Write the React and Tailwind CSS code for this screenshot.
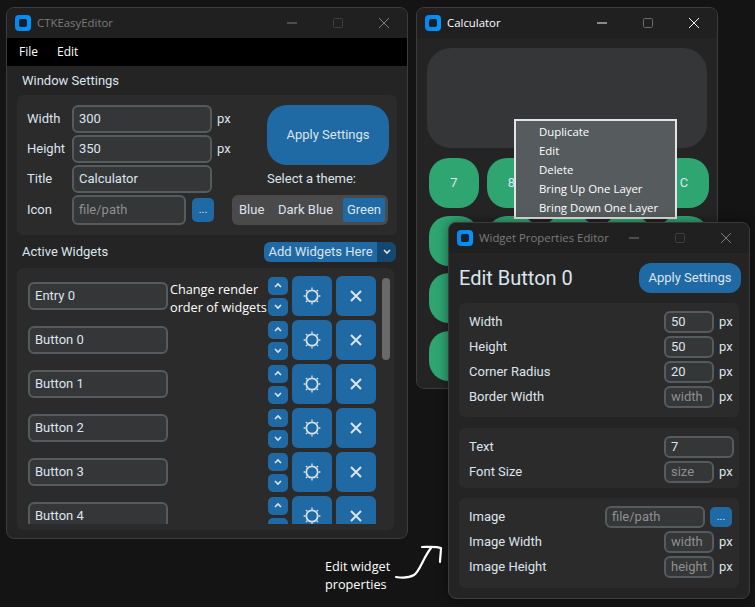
function Logo() {
  return (
    <div className="w-4 h-4 rounded-[4px] bg-gradient-to-r from-[#0a84e8] to-[#0096ff] flex items-center justify-center shrink-0">
      <div className="w-2 h-2 rounded-[2px] bg-[#14202c]" />
    </div>
  );
}
function TitleBar({ title, active, w }) {
  const tone = active ? "text-[#ffffff]" : "text-[#7c7c7c]";
  const stroke = active ? "#f2f2f2" : "#7c7c7c";
  const box = active ? "#6a6a6a" : "#3f3f3f";
  return (
    <div className={`h-[30px] bg-[#202020] flex items-center pl-[8px] shrink-0 ${tone}`} style={{ width: w }}>
      <Logo />
      <span className="ml-[6px] text-[11.4px] font-['Open_Sans','Noto_Sans',sans-serif] flex-1 leading-none">{title}</span>
      <div className="flex items-center">
        <svg width="12" height="12" viewBox="0 0 12 12" className="mr-[34px]"><path d="M1 6H11" stroke={stroke} strokeWidth="1" /></svg>
        <svg width="12" height="12" viewBox="0 0 12 12" className="mr-[34px]"><rect x="1.5" y="1.5" width="9" height="9" rx="1.2" fill="none" stroke={box} /></svg>
        <svg width="12" height="12" viewBox="0 0 12 12" className="mr-[17px]"><path d="M1 1L11 11M11 1L1 11" stroke={stroke} strokeWidth="1" /></svg>
      </div>
    </div>
  );
}
function Entry({ value, placeholder, className = "" }) {
  return (
    <div className={`border-2 border-[#565b5e] bg-[#343638] rounded-[6px] flex items-center pl-[5px] pb-[1px] text-[13px] leading-none shrink-0 ${placeholder ? "text-[#8f8f8f]" : "text-[#dce4ee]"} ${className}`}>
      {value || placeholder}
    </div>
  );
}
function Gear() {
  return (
    <svg width="20" height="20" viewBox="0 0 20 20" fill="none" stroke="#dce4ee">
      <circle cx="10" cy="10" r="5.7" strokeWidth="1.7" />
      <path d="M10 1.6V3.4M10 16.6V18.4M1.6 10H3.4M16.6 10H18.4M4 4L5.2 5.2M14.8 14.8L16 16M16 4L14.8 5.2M5.2 14.8L4 16" strokeWidth="1.3" />
    </svg>
  );
}
function Cross() {
  return (
    <svg width="14" height="14" viewBox="0 0 14 14" fill="none" stroke="#dce4ee" strokeWidth="2">
      <path d="M2 2L12 12M12 2L2 12" />
    </svg>
  );
}
function Chevron({ up }) {
  return (
    <svg width="8" height="7" viewBox="0 0 8 7" fill="none" stroke="#dce4ee" strokeWidth="1.6">
      <path d={up ? "M1 5L4 2L7 5" : "M1 2L4 5L7 2"} />
    </svg>
  );
}
function WidgetRow({ name, note }) {
  return (
    <div className="h-[40px] flex items-center mb-[4px] shrink-0">
      <Entry value={name} className="w-[140px] h-[28px] ml-[11px]" />
      <div className="w-[100px] text-[12.7px] leading-[18px] text-white font-['Open_Sans','Noto_Sans',sans-serif] whitespace-nowrap pl-[2px] mt-[4px]">
        {note}
      </div>
      <div className="flex flex-col gap-[3px] w-[20px] shrink-0">
        <div className="h-[18px] rounded-[5px] bg-[#1f6aa5] flex items-center justify-center"><Chevron up /></div>
        <div className="h-[18px] rounded-[5px] bg-[#1f6aa5] flex items-center justify-center"><Chevron /></div>
      </div>
      <div className="w-[40px] h-[40px] ml-[4px] rounded-[6px] bg-[#1f6aa5] flex items-center justify-center"><Gear /></div>
      <div className="w-[40px] h-[40px] ml-[4px] rounded-[6px] bg-[#1f6aa5] flex items-center justify-center"><Cross /></div>
    </div>
  );
}
function SettingRow({ label, children }) {
  return (
    <div className="flex items-center h-[28px] mb-[2px]">
      <span className="w-[45px] text-[13px] text-[#dce4ee]">{label}</span>
      {children}
    </div>
  );
}
function PropRow({ label, value, placeholder, wide }) {
  return (
    <div className="flex items-center h-[22px] mb-[3px] text-[13px] text-[#dce4ee]">
      <span className="flex-1">{label}</span>
      {wide ? (
        <Entry value={value} className="w-[70px] h-[22px]" />
      ) : (
        <>
          <Entry value={value} placeholder={placeholder} className="w-[50px] h-[22px]" />
          <span className="w-[20px] pl-[5px]">px</span>
        </>
      )}
    </div>
  );
}
const win = "absolute rounded-[8px] border border-[#3c3c3c] bg-[#242424] flex flex-col overflow-hidden font-['Roboto',sans-serif]";
export default function App() {
  const calc = ["7", "8", "", "", "C", "", "", "", "", "", "", "", "", "", "", "", "", "", "", ""];
  return (
    <div className="relative w-[755px] h-[607px] bg-[#141414] overflow-hidden">
      {/* Main editor window */}
      <div className={`${win} left-[6px] top-[7px] w-[402px] h-[532px]`}>
        <TitleBar title="CTKEasyEditor" w={400} />
        <div className="h-[28px] bg-black flex items-center pl-[12px] gap-[19px] text-[12px] text-white font-['Open_Sans','Noto_Sans',sans-serif] shrink-0">
          <span>File</span><span>Edit</span>
        </div>
        <div className="px-[10px] flex flex-col flex-1">
          <div className="h-[29px] flex items-center pl-[5px] text-[13px] text-[#dce4ee]">Window Settings</div>
          <div className="h-[140px] w-[380px] bg-[#2b2b2b] rounded-[6px] px-[10px] pt-[10px] flex">
            <div className="w-[205px] shrink-0">
              <SettingRow label="Width"><Entry value="300" className="w-[140px] h-[28px]" /><span className="ml-[5px] text-[13px] text-[#dce4ee]">px</span></SettingRow>
              <SettingRow label="Height"><Entry value="350" className="w-[140px] h-[28px]" /><span className="ml-[5px] text-[13px] text-[#dce4ee]">px</span></SettingRow>
              <SettingRow label="Title"><Entry value="Calculator" className="w-[140px] h-[28px]" /></SettingRow>
              <div className="flex items-center h-[30px]">
                <span className="w-[45px] text-[13px] text-[#dce4ee]">Icon</span>
                <Entry placeholder="file/path" className="w-[114px] h-[30px]" />
                <div className="w-[22px] h-[24px] ml-[6px] rounded-[5px] bg-[#1f6aa5] flex items-center justify-center text-[11px] text-[#dce4ee]">...</div>
              </div>
            </div>
            <div className="flex-1 flex flex-col">
              <div className="ml-[35px] w-[122px] h-[60px] rounded-[20px] bg-[#1f6aa5] flex items-center justify-center text-[13px] text-[#dce4ee]">Apply Settings</div>
              <div className="h-[28px] flex items-center ml-[35px] text-[13px] text-[#dce4ee]">Select a theme:</div>
              <div className="mt-[2px] h-[30px] w-[156px] rounded-[6px] bg-[#4a4a4a] flex items-center pl-[3px] text-[13px] text-[#dce4ee]">
                <span className="w-[35px] pl-[4px]">Blue</span>
                <span className="w-[73px] pl-[8px]">Dark Blue</span>
                <span className="w-[42px] h-[24px] bg-[#1f6aa5] rounded-[2px] flex items-center justify-center">Green</span>
              </div>
            </div>
          </div>
          <div className="h-[33px] flex items-center pl-[5px] pr-[1px] justify-between text-[13px] text-[#dce4ee]">
            <span>Active Widgets</span>
            <div className="flex h-[20px] w-[132px] rounded-[6px] overflow-hidden">
              <div className="flex-1 bg-[#1f6aa5] flex items-center justify-center text-[13px]">Add Widgets Here</div>
              <div className="w-[19px] bg-[#144870] flex items-center justify-center"><Chevron /></div>
            </div>
          </div>
          <div className="w-[377px] h-[262px] bg-[#2b2b2b] rounded-[6px] pt-[8px] relative">
            <div className="h-[248px] overflow-hidden flex flex-col">
              <WidgetRow name="Entry 0" note={<>Change render<br />order of widgets</>} />
              <WidgetRow name="Button 0" />
              <WidgetRow name="Button 1" />
              <WidgetRow name="Button 2" />
              <WidgetRow name="Button 3" />
              <WidgetRow name="Button 4" />
            </div>
            <div className="absolute left-[365px] top-[10px] w-[8px] h-[82px] rounded-[4px] bg-[#696969]" />
          </div>
        </div>
      </div>

      {/* Calculator */}
      <div className={`${win} left-[416px] top-[7px] w-[302px] h-[382px]`}>
        <TitleBar title="Calculator" active w={300} />
        <div className="bg-[#242424] flex-1 flex flex-col pl-[10px]">
          <div className="mt-[10px] w-[280px] h-[100px] rounded-[24px] bg-[#343638] shrink-0" />
          <div className="mt-[10px] ml-[2px] grid grid-cols-[repeat(5,50px)] auto-rows-[50px] gap-[7.5px]">
            {calc.map((c, i) => (
              <div key={i} className="rounded-[20px] bg-[#2fa572] flex items-center justify-center text-[13px] text-[#dce4ee]">{c}</div>
            ))}
          </div>
        </div>
      </div>

      {/* Context menu */}
      <div className="absolute left-[514px] top-[119px] w-[163px] h-[100px] border-2 border-[#e4e4e4] bg-[#565b5e] pl-[23px] pt-[1px] text-[11.4px] leading-[19px] text-white font-['Open_Sans','Noto_Sans',sans-serif] whitespace-nowrap">
        <div>Duplicate</div>
        <div>Edit</div>
        <div>Delete</div>
        <div>Bring Up One Layer</div>
        <div>Bring Down One Layer</div>
      </div>

      {/* Properties window */}
      <div className={`${win} left-[448px] top-[222px] w-[302px] h-[377px] shadow-[0_0_12px_rgba(0,0,0,0.45)]`}>
        <TitleBar title="Widget Properties Editor" w={300} />
        <div className="px-[10px] flex flex-col flex-1">
          <div className="h-[50px] flex items-center justify-between pb-[1px]">
            <span className="text-[20px] text-[#dce4ee]">Edit Button 0</span>
            <div className="w-[102px] h-[30px] mt-[1px] mr-[-2px] rounded-[12px] bg-[#1f6aa5] flex items-center justify-center text-[13px] text-[#dce4ee]">Apply Settings</div>
          </div>
          <div className="w-[280px] h-[114px] bg-[#2b2b2b] rounded-[6px] pl-[10px] pr-[5px] pt-[8px]">
            <PropRow label="Width" value="50" />
            <PropRow label="Height" value="50" />
            <PropRow label="Corner Radius" value="20" />
            <PropRow label="Border Width" placeholder="width" />
          </div>
          <div className="mt-[11px] w-[280px] h-[60px] bg-[#2b2b2b] rounded-[6px] pl-[10px] pr-[5px] pt-[8px]">
            <PropRow label="Text" value="7" wide />
            <PropRow label="Font Size" placeholder="size" />
          </div>
          <div className="mt-[10px] w-[280px] h-[90px] bg-[#2b2b2b] rounded-[6px] pl-[10px] pr-[7px] pt-[8px]">
            <div className="flex items-center h-[22px] mb-[3px] text-[13px] text-[#dce4ee]">
              <span className="flex-1">Image</span>
              <Entry placeholder="file/path" className="w-[100px] h-[22px]" />
              <div className="w-[22px] h-[20px] ml-[5px] rounded-[5px] bg-[#1f6aa5] flex items-center justify-center text-[11px]">...</div>
            </div>
            <div className="-mr-[2px]">
              <PropRow label="Image Width" placeholder="width" />
              <PropRow label="Image Height" placeholder="height" />
            </div>
          </div>
        </div>
      </div>

      {/* Annotation */}
      <div className="absolute left-[325px] top-[557px] text-[12.7px] leading-[18px] text-white font-['Open_Sans','Noto_Sans',sans-serif]">
        Edit widget<br />properties
      </div>
      <svg className="absolute left-[390px] top-[540px]" width="60" height="45" viewBox="0 0 60 45" fill="none" stroke="#fff" strokeWidth="2.2" strokeLinecap="round" strokeLinejoin="round">
        <path d="M6 37C12 38 19 38 24 35C30 31 33 18 41 8" />
        <path d="M32 7C37 7 46 6 51 8C51 12 50 18 50 22" />
      </svg>
    </div>
  );
}
